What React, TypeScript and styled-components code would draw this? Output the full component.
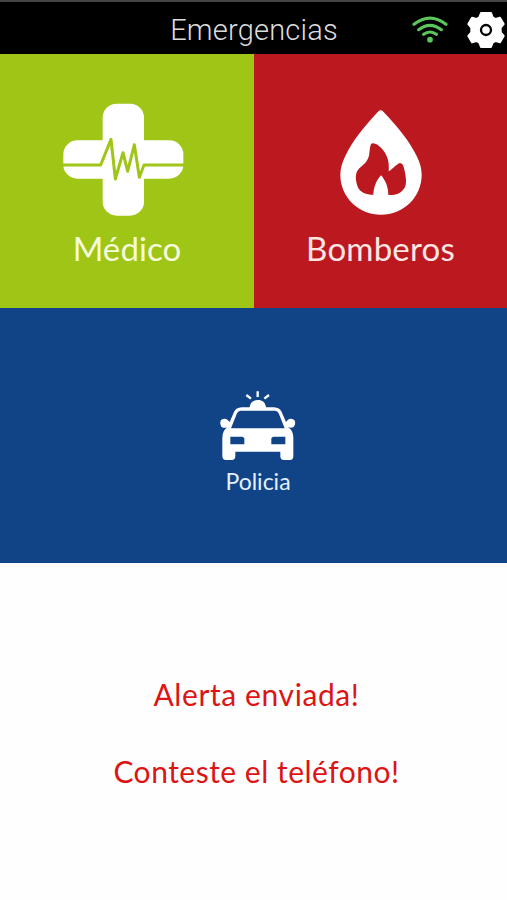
import React from "react";
import styled, { createGlobalStyle } from "styled-components";

const GlobalStyle = createGlobalStyle`
  * { box-sizing: border-box; }
  body { margin: 0; background: #fff; }
`;

const Screen = styled.main`
  width: 507px;
  height: 900px;
  display: flex;
  flex-direction: column;
  overflow: hidden;
  background: #fefefe;
`;

const Header = styled.header`
  height: 54px;
  flex: none;
  display: grid;
  grid-template-columns: 1fr auto 1fr;
  align-items: center;
  background: #000;
  border-top: 2px solid #454543;
`;

const Title = styled.h1`
  grid-column: 2;
  margin: 0;
  padding: 3px 0 0 1px;
  font: 300 29px/34px Roboto, sans-serif;
  letter-spacing: 0.2px;
  color: #dcdcdc;
`;

const HeaderIcons = styled.div`
  display: flex;
  justify-content: flex-end;
  align-items: center;
  gap: 19px;
  padding-top: 3px;
  padding-right: 2px;
`;

const Tiles = styled.section`
  flex: none;
  display: grid;
  grid-template-columns: 254px 253px;
  grid-template-rows: 254px 255px;
`;

const Tile = styled.button<{ $color: string; $pad: string; $wide?: boolean }>`
  display: flex;
  flex-direction: column;
  align-items: center;
  justify-content: flex-start;
  grid-column: ${(p) => (p.$wide ? "1 / -1" : "auto")};
  padding: ${(p) => p.$pad};
  border: 0;
  background: ${(p) => p.$color};
`;

const Label = styled.span<{ $size: number; $gap: number; $spacing: number; $color: string }>`
  margin-top: ${(p) => p.$gap}px;
  font: 400 ${(p) => p.$size}px/40px Lato, sans-serif;
  letter-spacing: ${(p) => p.$spacing}px;
  white-space: nowrap;
  color: ${(p) => p.$color};
`;

const Messages = styled.section`
  display: flex;
  flex-direction: column;
  align-items: center;
  gap: 37px;
  padding: 111px 0 0 6px;
`;

const Message = styled.p<{ $spacing: number }>`
  margin: 0;
  font: 400 30px/40px Lato, sans-serif;
  letter-spacing: ${(p) => p.$spacing}px;
  white-space: nowrap;
  color: #dc1414;
`;

const WifiIcon = () => (
  <svg width="36" height="28" viewBox="35 50 108 84" fill="none" stroke="#5bc65b" strokeWidth="9.5" strokeLinecap="round">
    <path d="M41 75Q89 38 137 75M55 91Q89 65 123 91M70 105Q89 91 108 105" />
    <circle cx="89" cy="121" r="8.5" fill="#5bc65b" stroke="none" />
  </svg>
);

const GearIcon = () => (
  <svg width="38" height="38" viewBox="-57 -57 114 114" fill="#fff" stroke="#fff" strokeWidth="6" strokeLinejoin="round">
    <path d="M-15-51H15L20-38L29-33L42-37L53-18L44-7V7L53 18L42 37L29 33L20 38L15 51H-15L-20 38L-29 33L-42 37L-53 18L-44 7V-7L-53-18L-42-37L-29-33L-20-38Z" />
    <circle r="15" stroke="#000" strokeWidth="7" />
  </svg>
);

const MedicalIcon = () => (
  <svg width="130" height="114" viewBox="36 39 390 342" fill="#fff">
    <rect x="158" y="41" width="124" height="336" rx="42" />
    <rect x="40" y="151" width="360" height="115" rx="42" />
    <path
      d="M36 225H152L183 148L196 267L219 188L233 244L253 164L268 262L282 225H404"
      fill="none"
      stroke="#9fc516"
      strokeWidth="9"
      strokeLinejoin="round"
    />
  </svg>
);

const FireIcon = () => (
  <svg width="85" height="107" viewBox="114 57 255 321">
    <path d="M234 65Q242 57 250 65C295 112 328 153 350 198Q365 228 365 254C365 322 310 374 243 374S121 322 121 254Q121 228 136 198C157 153 190 112 234 65Z" fill="#fff" />
    <path
      d="M213 163C217 157 228 161 237 168C261 188 269 212 266 244C278 238 289 222 300 219Q307 219 310 227C315 246 323 277 314 293C304 310 286 316 265 315C265 291 256 270 243 256C229 271 221 291 220 314C199 314 180 307 173 290C165 269 165 247 178 235C192 223 206 213 208 190Q210 169 213 163Z"
      fill="#bb191f"
    />
  </svg>
);

const PoliceIcon = () => (
  <svg width="78" height="71" viewBox="42 30 234 213">
    <g stroke="#fff" strokeWidth="7">
      <path d="M158 34V51M124 45L138 56M192 45L178 56" />
    </g>
    <path
      fill="#fff"
      fillRule="evenodd"
      d="M134 82C136 66 146 60 159 60S181 66 183 82H207Q224 83 230 96L243 126L249 119Q257 113 268 120Q274 130 266 141Q258 145 249 142Q265 151 265 173V229Q265 240 255 240H237Q226 240 226 229V215H91V229Q91 240 80 240H63Q52 240 52 229V173Q52 151 68 142Q57 146 49 140Q43 130 48 120Q59 113 68 120L74 126L87 96Q93 83 110 82ZM107 92Q99 93 96 100L78 145H239L221 100Q218 93 210 92ZM76 170V193H118V175L113 170ZM241 170V193H199V175L204 170Z"
    />
  </svg>
);

export default function App() {
  return (
    <>
      <GlobalStyle />
      <Screen>
        <Header>
          <Title>Emergencias</Title>
          <HeaderIcons>
            <WifiIcon />
            <GearIcon />
          </HeaderIcons>
        </Header>
        <Tiles>
          <Tile $color="#9fc516" $pad="49px 0 0">
            <MedicalIcon />
            <Label $size={33} $gap={11} $spacing={0.1} $color="#f6fbdc">Médico</Label>
          </Tile>
          <Tile $color="#bb191f" $pad="55px 0 0">
            <FireIcon />
            <Label $size={33} $gap={12} $spacing={0.2} $color="#fde6e4">Bomberos</Label>
          </Tile>
          <Tile $wide $color="#104487" $pad="82px 0 0 9px">
            <PoliceIcon />
            <Label $size={23} $gap={0} $spacing={0} $color="#e2f0fb">Policia</Label>
          </Tile>
        </Tiles>
        <Messages>
          <Message $spacing={0.6}>Alerta enviada!</Message>
          <Message $spacing={0.5}>Conteste el teléfono!</Message>
        </Messages>
      </Screen>
    </>
  );
}
